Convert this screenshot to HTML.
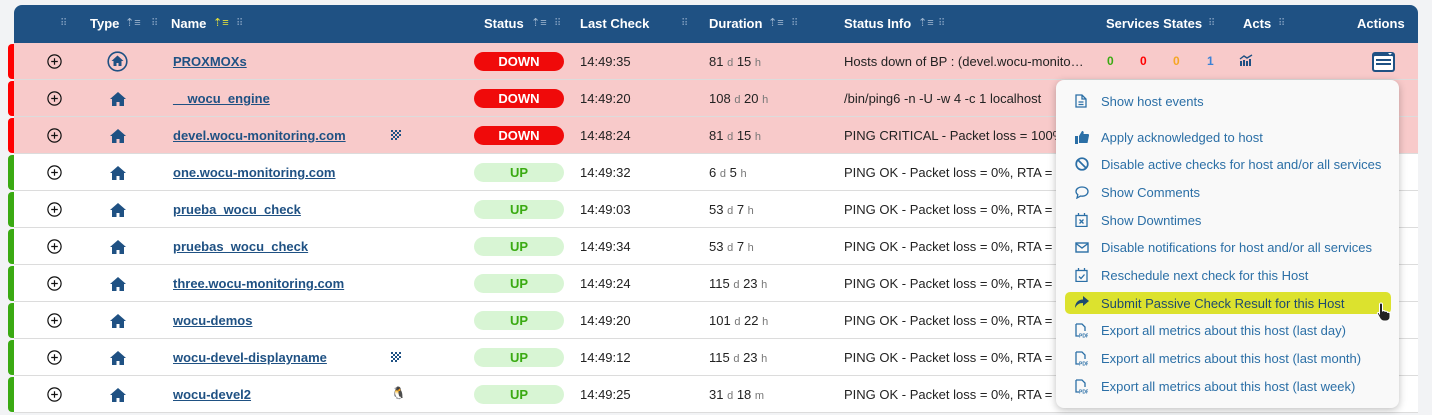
<!DOCTYPE html>
<html><head><meta charset="utf-8"><style>
*{box-sizing:border-box;margin:0;padding:0}
body{width:1432px;height:415px;background:#f2f3f5;font-family:"Liberation Sans",Arial,sans-serif;font-size:13px;color:#222;position:relative;overflow:hidden}
.hdr{position:absolute;left:14px;top:5px;width:1404px;height:38px;background:#1f5183;border-radius:8px 8px 0 0;color:#fff;font-weight:bold;font-size:13px}
.hdr span{position:absolute;top:11px}
.g{color:#7d9bbd;font-size:10px;letter-spacing:-1px;font-weight:normal}
.s{color:#9fb6cf;font-size:11px;font-weight:normal}
.row{position:absolute;left:14px;width:1404px;height:37px;border-bottom:1px solid #dcdcdc;background:#fff}
.row.d{background:#f8caca}
.bar{position:absolute;left:-6px;top:1px;width:6px;height:35px;border-radius:4px 0 0 4px}
.row>*{position:absolute}
.plus{left:33px;top:11px}
.name{left:159px;top:11px;color:#1f5183;font-weight:bold;text-decoration:underline}
.pill{left:460px;top:9px;width:90px;height:19px;border-radius:10px;text-align:center;font-weight:bold;line-height:19px}
.pill.dn{background:#f00a0a;color:#fff}
.pill.up{background:#d8f5d4;color:#3aaa12}
.t{left:566px;top:11px}
.du{left:695px;top:11px}
.du i{font-style:normal;color:#777;font-size:11px}
.info{left:830px;top:11px;white-space:nowrap}
.home{left:96px;top:12px}
.menu{position:absolute;left:1056px;top:80px;width:343px;height:328px;background:#f9f9f9;border-radius:8px;box-shadow:0 2px 8px rgba(0,0,0,.25)}
.mi{position:absolute;left:0;width:343px;height:22px;color:#2b6fa6;font-size:13px}
.mi span{position:absolute;left:45px;top:4px}
.mi svg{position:absolute;left:19px;top:4px}
.hl{background:#dce22e;border-radius:5px;left:9px;width:326px;color:#1f4a6e}
.hl span{left:36px}.hl svg{left:10px}
</style></head><body>
<div class="hdr">
<span class="g" style="left:46px;top:13px">⠿</span>
<span style="left:76px">Type</span><span class="s" style="left:111px">⇡≡</span><span class="g" style="left:137px;top:13px">⠿</span>
<span style="left:157px">Name</span><span class="s" style="left:199px;color:#e6e23a">⇡≡</span><span class="g" style="left:222px;top:13px">⠿</span>
<span style="left:470px">Status</span><span class="s" style="left:517px">⇡≡</span><span class="g" style="left:540px;top:13px">⠿</span>
<span style="left:566px">Last Check</span><span class="g" style="left:667px;top:13px">⠿</span>
<span style="left:695px">Duration</span><span class="s" style="left:754px">⇡≡</span><span class="g" style="left:777px;top:13px">⠿</span>
<span style="left:830px">Status Info</span><span class="s" style="left:904px">⇡≡</span><span class="g" style="left:924px;top:13px">⠿</span>
<span style="left:1092px">Services States</span><span class="g" style="left:1194px;top:13px">⠿</span>
<span style="left:1229px">Acts</span><span class="g" style="left:1264px;top:13px">⠿</span>
<span style="left:1343px">Actions</span>
</div>

<div class="row d" style="top:43px"><div class="bar" style="background:#f00"></div><svg class="plus" width="15" height="15" viewBox="0 0 15 15"><circle cx="7.5" cy="7.5" r="6.6" fill="none" stroke="#111" stroke-width="1.2"/><path d="M4.2 7.5h6.6M7.5 4.2v6.6" stroke="#111" stroke-width="1.2"/></svg>
<svg class="home" style="left:93px;top:8px" width="21" height="21" viewBox="0 0 21 21"><circle cx="10.5" cy="10.5" r="9.3" fill="none" stroke="#1f5183" stroke-width="1.6"/><path d="M10.5 4.5L4.5 10h2v5h3v-3h2v3h3v-5h2z" fill="#1f5183"/></svg>
<div class="name">PROXMOXs</div><div class="pill dn">DOWN</div><div class="t">14:49:35</div><div class="du">81 <i>d</i> 15 <i>h</i></div><div class="info">Hosts down of BP : (devel.wocu-monito…</div>
<div style="left:1093px;top:11px;color:#3aaa12;font-weight:bold;font-size:12px">0</div>
<div style="left:1126px;top:11px;color:#f00;font-weight:bold;font-size:12px">0</div>
<div style="left:1159px;top:11px;color:#f5a623;font-weight:bold;font-size:12px">0</div>
<div style="left:1193px;top:11px;color:#3b82d6;font-weight:bold;font-size:12px">1</div>
<svg style="left:1225px;top:11px" width="14" height="12" viewBox="0 0 14 12"><path d="M1 5l4-3 3 2 5-3" fill="none" stroke="#1f5183" stroke-width="1.4"/><path d="M1 7h2v5H1zM4 6h2v6H4zM7 7h2v5H7zM10 5h2v7h-2z" fill="#1f5183"/></svg>
<svg style="left:1357px;top:8px" width="25" height="22" viewBox="0 0 25 22"><rect x="1" y="1" width="23" height="20" rx="3" fill="#1f5183"/><rect x="3" y="5" width="19" height="14" rx="1" fill="#fff"/><rect x="5" y="8" width="15" height="2" fill="#1f5183"/><rect x="5" y="12" width="15" height="2" fill="#1f5183"/><path d="M17 2h4l-2 2z" fill="#fff"/></svg>
</div>

<div id="rows"></div>
<script>
var H='<svg class="home" width="16" height="14" viewBox="0 0 16 14"><path d="M8 0L0 7h2v7h4.5v-4h3v4H14V7h2z" fill="#1f5183"/></svg>';
var P='<svg class="plus" width="15" height="15" viewBox="0 0 15 15"><circle cx="7.5" cy="7.5" r="6.6" fill="none" stroke="#111" stroke-width="1.2"/><path d="M4.2 7.5h6.6M7.5 4.2v6.6" stroke="#111" stroke-width="1.2"/></svg>';
var W='<svg style="left:376px;top:12px" width="12" height="12" viewBox="0 0 12 12"><path d="M1 1h2v2H1zM5 1h2v2H5zM9 1h2v2H9zM3 3h2v2H3zM7 3h2v2H7zM1 5h2v2H1zM5 5h2v2H5zM9 5h2v2H9zM3 7h2v2H3zM7 7h2v2H7zM1 9h2v2H1zM5 9h2v2H5z" fill="#1f5183"/></svg>';
var R=[["d","__wocu_engine","DOWN","14:49:20","108","20","h","/bin/ping6 -n -U -w 4 -c 1 localhost",""],
["d","devel.wocu-monitoring.com","DOWN","14:48:24","81","15","h","PING CRITICAL - Packet loss = 100%","w"],
["u","one.wocu-monitoring.com","UP","14:49:32","6","5","h","PING OK - Packet loss = 0%, RTA = ",""],
["u","prueba_wocu_check","UP","14:49:03","53","7","h","PING OK - Packet loss = 0%, RTA = ",""],
["u","pruebas_wocu_check","UP","14:49:34","53","7","h","PING OK - Packet loss = 0%, RTA = ",""],
["u","three.wocu-monitoring.com","UP","14:49:24","115","23","h","PING OK - Packet loss = 0%, RTA = ",""],
["u","wocu-demos","UP","14:49:20","101","22","h","PING OK - Packet loss = 0%, RTA = ",""],
["u","wocu-devel-displayname","UP","14:49:12","115","23","h","PING OK - Packet loss = 0%, RTA = ","w"],
["u","wocu-devel2","UP","14:49:25","31","18","m","PING OK - Packet loss = 0%, RTA = ","l"]];
var s='';R.forEach(function(r,i){var d=r[0]=="d";
s+='<div class="row'+(d?' d':'')+'" style="top:'+(80+37*i)+'px"><div class="bar" style="background:'+(d?'#f00':'#3aaa12')+'"></div>'+P+H+
'<div class="name">'+r[1]+'</div>'+
(r[8]=="w"?W:'')+
(r[8]=="l"?'<div style="left:377px;top:10px;font-size:12px">🐧</div>':'')+
'<div class="pill '+(d?'dn':'up')+'">'+r[2]+'</div><div class="t">'+r[3]+'</div><div class="du">'+r[4]+' <i>d</i> '+r[5]+' <i>'+r[6]+'</i></div><div class="info">'+r[7]+'</div></div>';});
document.getElementById('rows').innerHTML=s;
</script>

<div class="menu">
<div class="mi" style="top:10px"><svg width="12" height="14" viewBox="0 0 12 14"><path d="M1 1h6l4 4v8H1z M7 1v4h4" fill="none" stroke="#2b6fa6" stroke-width="1.3"/><path d="M3.5 8h5M3.5 10.5h5" stroke="#2b6fa6" stroke-width="1.2"/></svg><span>Show host events</span></div>
<div class="mi" style="top:46px"><svg width="14" height="14" viewBox="0 0 14 14"><path d="M0 6h3v8H0zM4 6l3-5c1.5 0 2 1 1.5 3H13c1 0 1 1 1 1.5L12.5 13H4z" fill="#2b6fa6"/></svg><span>Apply acknowledged to host</span></div>
<div class="mi" style="top:73px"><svg width="14" height="14" viewBox="0 0 14 14"><circle cx="7" cy="7" r="5.8" fill="none" stroke="#2b6fa6" stroke-width="1.7"/><path d="M3 3l8 8" stroke="#2b6fa6" stroke-width="1.7"/></svg><span>Disable active checks for host and/or all services</span></div>
<div class="mi" style="top:101px"><svg width="14" height="14" viewBox="0 0 14 14"><path d="M7 2C3.5 2 1 4 1 6.5c0 1.3.7 2.4 1.8 3.2L2 13l3.5-2c.5.1 1 .2 1.5.2 3.5 0 6-2 6-4.7S10.5 2 7 2z" fill="none" stroke="#2b6fa6" stroke-width="1.3"/></svg><span>Show Comments</span></div>
<div class="mi" style="top:129px"><svg width="13" height="14" viewBox="0 0 13 14"><rect x="1" y="2.5" width="11" height="11" fill="none" stroke="#2b6fa6" stroke-width="1.3"/><path d="M3.5 0v3M9.5 0v3M4.5 6.5l4 4M8.5 6.5l-4 4" stroke="#2b6fa6" stroke-width="1.3"/></svg><span>Show Downtimes</span></div>
<div class="mi" style="top:156px"><svg width="14" height="14" viewBox="0 0 14 14"><rect x="1" y="3" width="12" height="9" fill="none" stroke="#2b6fa6" stroke-width="1.4"/><path d="M1 3.5l6 4.5 6-4.5" fill="none" stroke="#2b6fa6" stroke-width="1.4"/></svg><span>Disable notifications for host and/or all services</span></div>
<div class="mi" style="top:184px"><svg width="13" height="14" viewBox="0 0 13 14"><rect x="1" y="2.5" width="11" height="11" fill="none" stroke="#2b6fa6" stroke-width="1.3"/><path d="M3.5 0v3M9.5 0v3M4 8.5l2 2 3.5-4" fill="none" stroke="#2b6fa6" stroke-width="1.3"/></svg><span>Reschedule next check for this Host</span></div>
<div class="mi hl" style="top:212px"><svg width="14" height="13" viewBox="0 0 14 13"><path d="M8 0l6 5-6 5V7C4 7 2 8.5 0 12 0 7 3 3.5 8 3.5z" fill="#1f4a6e"/></svg><span>Submit Passive Check Result for this Host</span></div>
<div class="mi" style="top:239px"><svg width="13" height="15" viewBox="0 0 13 15"><path d="M1 1h6l3 3v4M1 1v12h3" fill="none" stroke="#2b6fa6" stroke-width="1.3"/><text x="4" y="14.5" font-size="5" fill="#2b6fa6" font-family="Liberation Sans" font-weight="bold">PDF</text></svg><span>Export all metrics about this host (last day)</span></div>
<div class="mi" style="top:267px"><svg width="13" height="15" viewBox="0 0 13 15"><path d="M1 1h6l3 3v4M1 1v12h3" fill="none" stroke="#2b6fa6" stroke-width="1.3"/><text x="4" y="14.5" font-size="5" fill="#2b6fa6" font-family="Liberation Sans" font-weight="bold">PDF</text></svg><span>Export all metrics about this host (last month)</span></div>
<div class="mi" style="top:295px"><svg width="13" height="15" viewBox="0 0 13 15"><path d="M1 1h6l3 3v4M1 1v12h3" fill="none" stroke="#2b6fa6" stroke-width="1.3"/><text x="4" y="14.5" font-size="5" fill="#2b6fa6" font-family="Liberation Sans" font-weight="bold">PDF</text></svg><span>Export all metrics about this host (last week)</span></div>
</div>
<svg style="position:absolute;left:1376px;top:302px" width="16" height="20" viewBox="0 0 16 20"><path d="M5 1c1 0 1.5.6 1.5 1.5V9l1-.5c1 0 1.5.5 1.5 1l1-.3c1 0 1.5.6 1.5 1.2l1-.2c1 0 1.5.7 1.5 1.5V15c0 2-1.5 4-4 4H8c-2 0-3-1-4-2.5L1.5 12c-.5-1 .5-2 1.5-1.3L3.5 11.5V2.5C3.5 1.6 4 1 5 1z" fill="#222" stroke="#fff" stroke-width="1"/></svg>
</body></html>
